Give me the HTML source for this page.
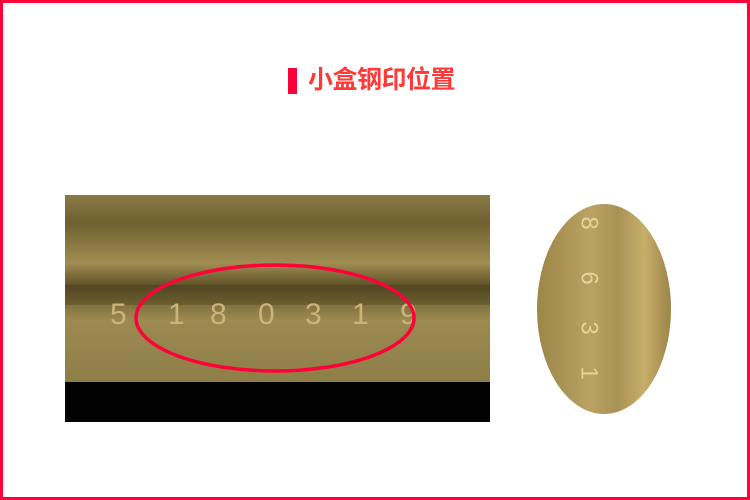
<!DOCTYPE html>
<html><head><meta charset="utf-8"><style>
html,body{margin:0;padding:0}
body{width:750px;height:500px;position:relative;overflow:hidden;background:#fff;font-family:"Liberation Sans","Noto Sans CJK SC",sans-serif}
.frame{position:absolute;left:0;top:0;width:744px;height:494px;border:3px solid #ff0038}
.bar{position:absolute;left:288px;top:68px;width:9px;height:26px;background:#ff0038}
.title{position:absolute;left:308px;top:63px;font-size:25px;font-weight:bold;color:#ff3838;line-height:34px;letter-spacing:-0.5px}
.photo{position:absolute;left:65px;top:195px;width:425px;height:227px;overflow:hidden;
background:linear-gradient(180deg,#8a7a45 0%,#6f6030 12%,#a08d52 30%,#5e5128 40%,#9c8a50 55%,#8f7f48 80%,#7d6d3a 100%)}
.black{position:absolute;left:0;top:187px;width:425px;height:40px;background:#020202}
.num{position:absolute;top:103px;font-size:30px;color:#c9b57a;font-family:"Liberation Sans",sans-serif}
.oval{position:absolute;left:537px;top:204px;width:134px;height:210px;border-radius:50%;overflow:hidden;
background:linear-gradient(90deg,#9c8648 0%,#b9a263 40%,#a89255 60%,#c7ae6a 80%,#9b8548 100%)}
.onum{position:absolute;left:45px;font-size:24px;color:#e6d29a;transform:rotate(90deg)}
</style></head><body>
<div class="frame"></div>
<div class="bar"></div>
<div class="title">小盒钢印位置</div>
<div class="photo">
<div style="position:absolute;left:0;top:90px;width:425px;height:20px;background:rgba(60,50,20,0.3)"></div>
<div class="num" style="left:45px">5</div>
<div class="num" style="left:103px">1</div>
<div class="num" style="left:145px">8</div>
<div class="num" style="left:193px">0</div>
<div class="num" style="left:240px">3</div>
<div class="num" style="left:287px">1</div>
<div class="num" style="left:335px">9</div>
<div class="black"></div>
</div>
<svg style="position:absolute;left:0;top:0" width="750" height="500"><ellipse cx="275" cy="318" rx="139" ry="53" fill="none" stroke="#ff0038" stroke-width="3.5"/></svg>
<div class="oval">
<div class="onum" style="top:5px">8</div>
<div class="onum" style="top:60px">6</div>
<div class="onum" style="top:110px">3</div>
<div class="onum" style="top:155px">1</div>
</div>
</body></html>
